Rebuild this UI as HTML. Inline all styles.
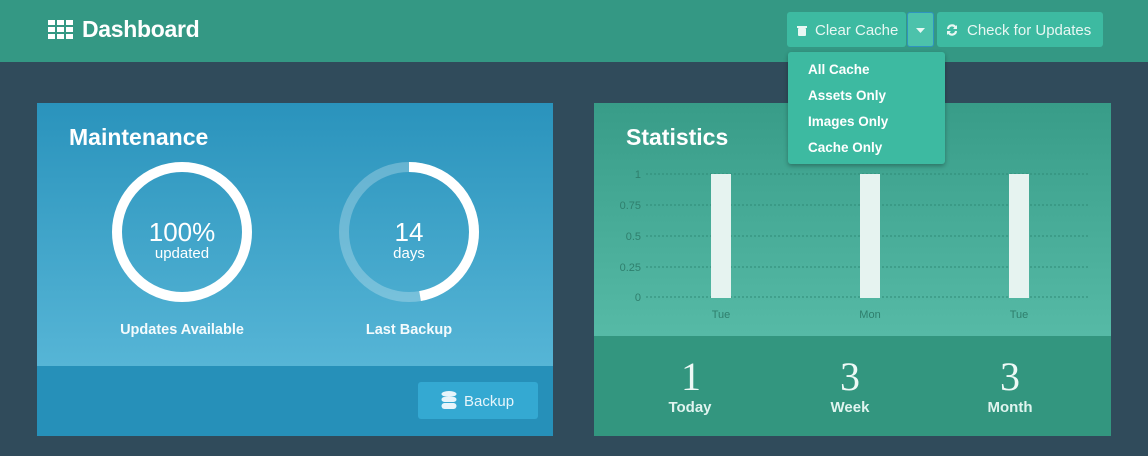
<!DOCTYPE html>
<html><head><meta charset="utf-8"><style>
*{margin:0;padding:0;box-sizing:border-box}
body{width:1148px;height:456px;background:#304b5b;font-family:"Liberation Sans",sans-serif;position:relative;overflow:hidden;color:#fff}
.hdr{position:absolute;left:0;top:0;width:1148px;height:62px;background:#349884}
.title{position:absolute;left:48px;top:16px;font-size:23px;font-weight:bold;letter-spacing:-0.3px}
.btn{position:absolute;top:12px;height:35px;background:#3dbaa1;border-radius:3px;font-size:15px;line-height:37px;color:#e8f7f3}
.card{position:absolute;top:103px;height:333px}
.dd{position:absolute;left:788px;top:52px;width:157px;height:112px;background:#3dbaa1;border-radius:3px;box-shadow:0 2px 5px rgba(0,0,0,.3)}
.dd div{position:absolute;left:20px;font-size:13.5px;font-weight:bold}
.lbl{position:absolute;font-size:14.5px;font-weight:bold;text-align:center;width:200px;color:#f4fbfd}
.num{position:absolute;font-family:"Liberation Serif",serif;font-size:40px;width:120px;text-align:center;top:353px;font-weight:normal;color:#eef9f6}
.sl{position:absolute;font-size:15px;font-weight:bold;width:120px;text-align:center;top:399px;color:#e0f4ef}
</style></head><body>
<div class="hdr"></div>
<svg style="position:absolute;left:48px;top:20px" width="25" height="19"><g fill="#fff"><rect x="0" y="0" width="7" height="5"/><rect x="9" y="0" width="7" height="5"/><rect x="18" y="0" width="7" height="5"/><rect x="0" y="7" width="7" height="5"/><rect x="9" y="7" width="7" height="5"/><rect x="18" y="7" width="7" height="5"/><rect x="0" y="14" width="7" height="5"/><rect x="9" y="14" width="7" height="5"/><rect x="18" y="14" width="7" height="5"/></g></svg>
<div class="title" style="left:82px">Dashboard</div>
<div class="btn" style="left:787px;width:119px;padding-left:28px">Clear Cache</div>
<svg style="position:absolute;left:797px;top:25px" width="10" height="11"><rect x="0" y="1" width="10" height="2" fill="#e8f7f3"/><rect x="1" y="3" width="8" height="8" rx="1" fill="#e8f7f3"/></svg>
<div class="btn" style="left:907px;width:27px;background:#4cc2ab;border:1px solid #2f94c0"></div>
<svg style="position:absolute;left:916px;top:28px" width="9" height="5"><path d="M0 0h9L4.5 5z" fill="#e8f7f3"/></svg>
<div class="btn" style="left:937px;width:166px;padding-left:30px">Check for Updates</div>
<svg style="position:absolute;left:946px;top:24px" width="12" height="12" viewBox="0 0 12 12"><path d="M2 5A4 4 0 0 1 9.5 3.5M10 7A4 4 0 0 1 2.5 8.5" stroke="#e8f7f3" stroke-width="2.2" fill="none"/><path d="M11 1v4H7z M1 11V7h4z" fill="#e8f7f3"/></svg>

<div class="card" style="left:37px;width:516px;background:linear-gradient(#2a93bc,#56b5d6 263px,#2690b9 263px)"></div>
<div style="position:absolute;left:69px;top:124px;font-size:23px;font-weight:bold">Maintenance</div>
<svg style="position:absolute;left:37px;top:103px" width="516" height="333">
<circle cx="145" cy="129" r="65" stroke="#fff" stroke-width="10" fill="none"/>
<circle cx="372" cy="129" r="65" stroke="rgba(255,255,255,.25)" stroke-width="10" fill="none"/>
<circle cx="372" cy="129" r="65" stroke="#fff" stroke-width="10" fill="none" stroke-dasharray="193 500" transform="rotate(-90 372 129)"/>
</svg>
<div style="position:absolute;left:122px;top:217px;width:120px;text-align:center;font-size:26px">100%</div>
<div style="position:absolute;left:122px;top:245px;width:120px;text-align:center;font-size:15px">updated</div>
<div style="position:absolute;left:349px;top:217px;width:120px;text-align:center;font-size:26px">14</div>
<div style="position:absolute;left:349px;top:245px;width:120px;text-align:center;font-size:15px">days</div>
<div class="lbl" style="left:82px;top:322px">Updates Available</div>
<div class="lbl" style="left:309px;top:322px">Last Backup</div>
<div style="position:absolute;left:418px;top:382px;width:120px;height:37px;background:#34a9d2;border-radius:3px;font-size:15px;line-height:39px;padding-left:46px;color:#e6f5fb">Backup</div>
<svg style="position:absolute;left:441px;top:391px" width="16" height="19"><g fill="#e6f5fb"><ellipse cx="8" cy="3" rx="7.5" ry="3"/><rect x=".5" y="6" width="15" height="5" rx="3"/><rect x=".5" y="12" width="15" height="6" rx="3"/></g></svg>

<div class="card" style="left:594px;width:517px;background:linear-gradient(#389c88,#56baa6 233px,#33967f 233px)"></div>
<div style="position:absolute;left:626px;top:124px;font-size:23px;font-weight:bold">Statistics</div>
<svg style="position:absolute;left:594px;top:160px" width="517" height="170" font-family="Liberation Sans" font-size="11" fill="#2f7f6d">
<g stroke="#2f8a76" stroke-dasharray="2 2" stroke-width="1">
<line x1="52" y1="14" x2="494" y2="14"/><line x1="52" y1="45" x2="494" y2="45"/><line x1="52" y1="76" x2="494" y2="76"/><line x1="52" y1="107" x2="494" y2="107"/><line x1="52" y1="137" x2="494" y2="137"/></g>
<g text-anchor="end"><text x="47" y="18">1</text><text x="47" y="49">0.75</text><text x="47" y="80">0.5</text><text x="47" y="111">0.25</text><text x="47" y="141">0</text></g>
<g fill="#e6f3f0"><rect x="117" y="14" width="20" height="124"/><rect x="266" y="14" width="20" height="124"/><rect x="415" y="14" width="20" height="124"/></g>
<g text-anchor="middle"><text x="127" y="158">Tue</text><text x="276" y="158">Mon</text><text x="425" y="158">Tue</text></g>
</svg>
<div class="num" style="left:631px">1</div><div class="sl" style="left:630px">Today</div>
<div class="num" style="left:790px">3</div><div class="sl" style="left:790px">Week</div>
<div class="num" style="left:950px">3</div><div class="sl" style="left:950px">Month</div>

<div class="dd"><div style="top:10px">All Cache</div><div style="top:36px">Assets Only</div><div style="top:62px">Images Only</div><div style="top:88px">Cache Only</div></div>
</body></html>
